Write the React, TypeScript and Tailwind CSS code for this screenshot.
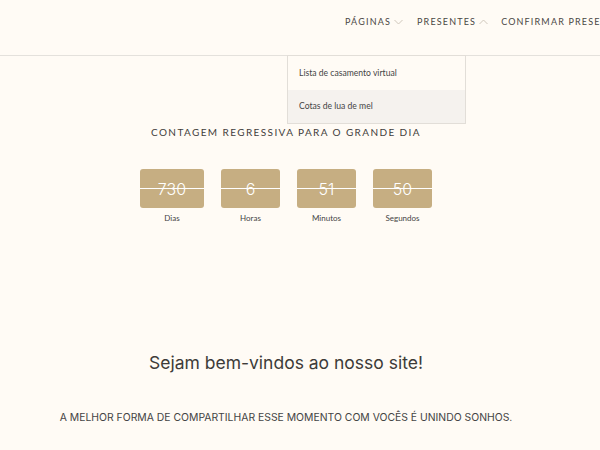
import React from "react";

const Chevron = ({ up }: { up?: boolean }) => (
  <svg width="9" height="6" viewBox="0 0 9 6" className="ml-[3px]" fill="none" stroke="#cfc7bb" strokeWidth="1">
    {up ? <path d="M0.5 5 L4.5 1 L8.5 5" /> : <path d="M0.5 1 L4.5 5 L8.5 1" />}
  </svg>
);

const Box = ({ n, label, w }: { n: string; label: string; w: string }) => (
  <div className="flex flex-col items-center">
    <div className={`relative ${w} h-[39px] rounded-[3px] bg-[#c6ae82] flex items-center justify-center`}>
      <span className="text-white text-[16px] font-light leading-none" style={{ fontFamily: "Inter, 'Noto Sans', sans-serif" }}>{n}</span>
      <div className="absolute left-0 right-0 top-[19px] h-px bg-white" />
    </div>
    <div className="mt-[4px] text-[8px] text-[#444]" style={{ fontFamily: "Lato, sans-serif" }}>{label}</div>
  </div>
);

export default function App() {
  return (
    <div className="relative w-[600px] h-[450px] overflow-hidden bg-[#fffbf5]" style={{ fontFamily: "Lato, sans-serif" }}>
      <header className="h-[56px] border-b border-[#e4e1dc] flex items-start">
        <nav className="ml-[345px] mt-[15px] flex items-center whitespace-nowrap text-[9px] tracking-[0.13em] text-[#4a4744]">
          <span className="flex items-center">PÁGINAS<Chevron /></span>
          <span className="flex items-center ml-[14px]">PRESENTES<Chevron up /></span>
          <span className="ml-[13px]">CONFIRMAR PRESENÇA</span>
        </nav>
      </header>
      <div className="absolute left-[287px] top-[55px] w-[179px] border border-[#e2ded8] bg-[#fffbf5] text-[8.6px] text-[#444]">
        <div className="h-[34px] flex items-center pl-[11px]">Lista de casamento virtual</div>
        <div className="h-[33px] flex items-center pl-[11px] bg-[#f5f2ee]">Cotas de lua de mel</div>
      </div>
      <main className="w-[572px] flex flex-col items-center">
        <h2 className="mt-[69px] text-[10px] tracking-[0.14em] text-[#3f3d3b]">CONTAGEM REGRESSIVA PARA O GRANDE DIA</h2>
        <div className="mt-[29px] flex gap-[17px]">
          <Box n="730" label="Dias" w="w-[64px]" />
          <Box n="6" label="Horas" w="w-[59px]" />
          <Box n="51" label="Minutos" w="w-[59px]" />
          <Box n="50" label="Segundos" w="w-[59px]" />
        </div>
        <h1 className="mt-[126px] text-[17.5px] text-[#3d3b39]" style={{ fontFamily: "Inter, 'Noto Sans', sans-serif" }}>Sejam bem-vindos ao nosso site!</h1>
        <p className="mt-[34px] text-[10.4px] text-[#444]" style={{ fontFamily: "Inter, 'Noto Sans', sans-serif" }}>A MELHOR FORMA DE COMPARTILHAR ESSE MOMENTO COM VOCÊS É UNINDO SONHOS.</p>
      </main>
    </div>
  );
}
